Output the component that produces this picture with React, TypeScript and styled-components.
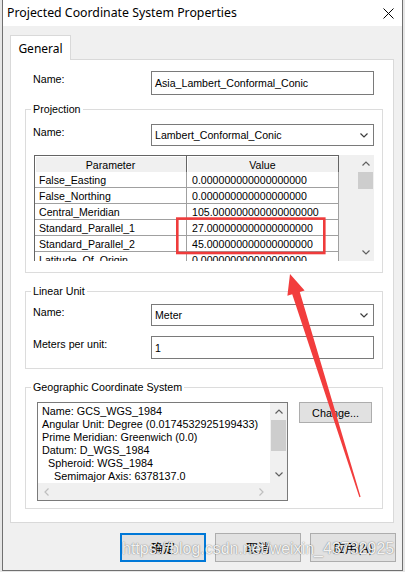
import React from "react";
import styled, { createGlobalStyle } from "styled-components";

const SEGOE = `"Noto Sans", "Noto Sans CJK SC", sans-serif`;
const MSS = `"Liberation Sans", Arial, "Noto Sans CJK SC", sans-serif`;
const CJK = `"Noto Sans CJK SC", "Noto Sans", sans-serif`;

const GlobalStyle = createGlobalStyle`
  html, body { margin: 0; padding: 0; }
  body { background: #e6e6e6; width: 405px; height: 572px; overflow: hidden; }
  * { box-sizing: border-box; }
`;

const Page = styled.div`
  position: relative;
  width: 405px;
  height: 572px;
  padding-left: 2px;
`;

const Window = styled.div`
  width: 401px;
  height: 571px;
  border: 1px solid #707070;
  border-top: none;
  background: #f0f0f0;
  display: flex;
  flex-direction: column;
  color: #000;
`;

const TitleBar = styled.div`
  height: 26px;
  background: #fff;
  display: flex;
  align-items: center;
  justify-content: space-between;
  padding: 0 8px 0 4px;
`;

const Title = styled.div`
  font-family: ${SEGOE};
  font-size: 12.3px;
  line-height: 16px;
`;

const Body = styled.div`
  flex: 1;
  display: flex;
  flex-direction: column;
  padding: 9px 8px 0 7px;
`;

const TabStrip = styled.div`
  display: flex;
  height: 25px;
  margin-bottom: -1px;
  position: relative;
  z-index: 1;
`;

const Tab = styled.div`
  width: 61px;
  height: 25px;
  background: #fff;
  border: 1px solid #d9d9d9;
  border-bottom: none;
  display: flex;
  align-items: center;
  justify-content: center;
  font-family: ${SEGOE};
  font-size: 12px;
  padding-top: 1px;
`;

const Panel = styled.div`
  height: 464px;
  background: #fff;
  border: 1px solid #d9d9d9;
  padding: 11px 10px 0 14px;
  display: flex;
  flex-direction: column;
`;

const FormRow = styled.div<{ $inset?: boolean; $mt?: number }>`
  display: flex;
  align-items: flex-start;
  padding: ${(p) => (p.$inset ? "0 9px 0 8px" : "0")};
  margin-top: ${(p) => p.$mt ?? 0}px;
`;

const Label = styled.div`
  width: 118px;
  flex: none;
  font-family: ${MSS};
  font-size: 10.7px;
  line-height: 16px;
`;

const Field = styled.div<{ $h: number }>`
  flex: 1;
  height: ${(p) => p.$h}px;
  border: 1px solid #7a7a7a;
  background: #fff;
  display: flex;
  align-items: center;
  justify-content: space-between;
  padding: 0 5px 0 3px;
  font-family: ${MSS};
  font-size: 10.6px;
  line-height: 16px;
  white-space: nowrap;
`;

const Group = styled.fieldset<{ $mt: number; $pt: number; $pb: number }>`
  margin: ${(p) => p.$mt}px 0 0 0;
  border: 1px solid #dcdcdc;
  padding: ${(p) => `${p.$pt}px 8px ${p.$pb}px 7px`};
  min-width: 0;
`;

const Legend = styled.legend`
  font-family: ${MSS};
  font-size: 10.7px;
  line-height: 14px;
  padding: 0 2px;
  margin-left: -2px;
`;

const GridBox = styled.div`
  margin: 9px 0 0 1px;
  height: 106px;
  display: flex;
  background: #f0f0f0;
  overflow: hidden;
`;

const Table = styled.div`
  width: 305px;
  flex: none;
  display: grid;
  grid-template-columns: 152px 152px;
  grid-auto-rows: 16px;
  align-content: start;
  border-left: 1px solid #646464;
  border-top: 1px solid #646464;
  font-family: ${MSS};
  font-size: 10.6px;
`;

const HeadCell = styled.div`
  height: 18px;
  background: #f0f0f0;
  border-right: 1px solid #646464;
  border-bottom: 1px solid #505050;
  display: flex;
  align-items: center;
  justify-content: center;
  box-shadow: inset 1px 1px 0 #fff;
`;

const Cell = styled.div<{ $pad: number }>`
  background: #fff;
  border-right: 1px solid #a0a0a0;
  border-bottom: 1px solid #a0a0a0;
  padding-left: ${(p) => p.$pad}px;
  display: flex;
  align-items: center;
  white-space: nowrap;
  overflow: hidden;
`;

const Spacer = styled.div`
  flex: 1;
`;

const VScroll = styled.div`
  width: 17px;
  flex: none;
  display: flex;
  flex-direction: column;
  background: #f0f0f0;
`;

const ScrollArrow = styled.div`
  height: 17px;
  width: 100%;
  flex: none;
  display: flex;
  align-items: center;
  justify-content: center;
`;

const HArrow = styled.div`
  width: 17px;
  height: 100%;
  flex: none;
  display: flex;
  align-items: center;
  justify-content: center;
`;

const Thumb = styled.div<{ $h: number }>`
  height: ${(p) => p.$h}px;
  margin: 0 1px;
  background: #cdcdcd;
  flex: none;
`;

const Track = styled.div`
  flex: 1;
`;

const GeoRow = styled.div`
  display: flex;
  align-items: flex-start;
  gap: 11px;
  padding-left: 4px;
`;

const InfoBox = styled.div`
  width: 251px;
  height: 99px;
  border: 1px solid #7a7a7a;
  background: #fff;
  display: grid;
  grid-template-columns: 1fr 17px;
  grid-template-rows: 1fr 17px;
`;

const InfoText = styled.div`
  padding: 2px 0 0 4px;
  overflow: hidden;
  font-family: ${MSS};
  font-size: 10.8px;
  line-height: 13px;
  white-space: nowrap;
`;

const InfoLine = styled.div<{ $indent: number }>`
  padding-left: ${(p) => p.$indent * 6}px;
`;

const HScroll = styled.div`
  display: flex;
  background: #f0f0f0;
  justify-content: space-between;
`;

const Corner = styled.div`
  background: #f0f0f0;
`;

const SmallButton = styled.div`
  width: 73px;
  height: 21px;
  background: #e1e1e1;
  border: 1px solid #adadad;
  display: flex;
  align-items: center;
  justify-content: center;
  font-family: ${MSS};
  font-size: 10.8px;
`;

const ButtonRow = styled.div`
  display: flex;
  justify-content: flex-end;
  gap: 9px;
  margin: 10px -2px 0 0;
`;

const DlgButton = styled.div<{ $primary?: boolean }>`
  width: 86px;
  height: 29px;
  background: #e1e1e1;
  border: ${(p) => (p.$primary ? "2px solid #0078d7" : "1px solid #adadad")};
  display: flex;
  align-items: center;
  justify-content: center;
  font-family: ${CJK};
  font-size: 12px;
`;

const Overlay = styled.svg`
  position: absolute;
  left: 0;
  top: 0;
  pointer-events: none;
`;

const Watermark = styled.div`
  position: absolute;
  left: 122px;
  top: 540px;
  font-family: ${MSS};
  font-size: 16px;
  line-height: 18px;
  color: rgba(255, 255, 255, 0.92);
  text-shadow: 0 0 1px rgba(0, 0, 0, 0.45), 0 0 2px rgba(0, 0, 0, 0.2);
  white-space: nowrap;
  pointer-events: none;
`;

type Dir = "up" | "down" | "left" | "right";

const Chevron = ({ dir, color = "#606060" }: { dir: Dir; color?: string }) => {
  const pts: Record<Dir, string> = {
    up: "0.5,4.5 4,1 7.5,4.5",
    down: "0.5,0.5 4,4 7.5,0.5",
    left: "4.5,0.5 1,4 4.5,7.5",
    right: "0.5,0.5 4,4 0.5,7.5",
  };
  const vertical = dir === "up" || dir === "down";
  return (
    <svg width={vertical ? 8 : 5} height={vertical ? 5 : 8} viewBox={vertical ? "0 0 8 5" : "0 0 5 8"}>
      <polyline points={pts[dir]} fill="none" stroke={color} strokeWidth="1.2" />
    </svg>
  );
};

const rows: [string, string][] = [
  ["False_Easting", "0.000000000000000000"],
  ["False_Northing", "0.000000000000000000"],
  ["Central_Meridian", "105.000000000000000000"],
  ["Standard_Parallel_1", "27.000000000000000000"],
  ["Standard_Parallel_2", "45.000000000000000000"],
  ["Latitude_Of_Origin", "0.000000000000000000"],
];

const info: [number, string][] = [
  [0, "Name: GCS_WGS_1984"],
  [0, "Angular Unit: Degree (0.0174532925199433)"],
  [0, "Prime Meridian: Greenwich (0.0)"],
  [0, "Datum: D_WGS_1984"],
  [1, "Spheroid: WGS_1984"],
  [2, "Semimajor Axis: 6378137.0"],
];

export default function App() {
  return (
    <>
      <GlobalStyle />
      <Page>
        <Window>
          <TitleBar>
            <Title>Projected Coordinate System Properties</Title>
            <svg width="11" height="11" viewBox="0 0 11 11">
              <path d="M0.5 0.5 L10.5 10.5 M10.5 0.5 L0.5 10.5" stroke="#000" strokeWidth="1" />
            </svg>
          </TitleBar>
          <Body>
            <TabStrip>
              <Tab>General</Tab>
            </TabStrip>
            <Panel>
              <FormRow $inset>
                <Label>Name:</Label>
                <Field $h={24}>Asia_Lambert_Conformal_Conic</Field>
              </FormRow>

              <Group $mt={7} $pt={8} $pb={11}>
                <Legend>Projection</Legend>
                <FormRow>
                  <Label>Name:</Label>
                  <Field $h={22}>
                    <span>Lambert_Conformal_Conic</span>
                    <Chevron dir="down" color="#3c3c3c" />
                  </Field>
                </FormRow>
                <GridBox>
                  <Table>
                    <HeadCell>Parameter</HeadCell>
                    <HeadCell>Value</HeadCell>
                    {rows.map(([k, v]) => (
                      <React.Fragment key={k}>
                        <Cell $pad={4}>{k}</Cell>
                        <Cell $pad={5}>{v}</Cell>
                      </React.Fragment>
                    ))}
                  </Table>
                  <Spacer />
                  <VScroll>
                    <ScrollArrow>
                      <Chevron dir="up" />
                    </ScrollArrow>
                    <Thumb $h={17} />
                    <Track />
                    <ScrollArrow>
                      <Chevron dir="down" />
                    </ScrollArrow>
                  </VScroll>
                </GridBox>
              </Group>

              <Group $mt={11} $pt={6} $pb={9}>
                <Legend>Linear Unit</Legend>
                <FormRow>
                  <Label>Name:</Label>
                  <Field $h={22}>
                    <span>Meter</span>
                    <Chevron dir="down" color="#3c3c3c" />
                  </Field>
                </FormRow>
                <FormRow $mt={10}>
                  <Label>Meters per unit:</Label>
                  <Field $h={23}>1</Field>
                </FormRow>
              </Group>

              <Group $mt={11} $pt={8} $pb={7}>
                <Legend>Geographic Coordinate System</Legend>
                <GeoRow>
                  <InfoBox>
                    <InfoText>
                      {info.map(([ind, t]) => (
                        <InfoLine key={t} $indent={ind}>
                          {t}
                        </InfoLine>
                      ))}
                    </InfoText>
                    <VScroll>
                      <ScrollArrow>
                        <Chevron dir="up" />
                      </ScrollArrow>
                      <Thumb $h={31} />
                      <Track />
                      <ScrollArrow>
                        <Chevron dir="down" />
                      </ScrollArrow>
                    </VScroll>
                    <HScroll>
                      <HArrow>
                        <Chevron dir="left" color="#bfbfbf" />
                      </HArrow>
                      <HArrow>
                        <Chevron dir="right" color="#bfbfbf" />
                      </HArrow>
                    </HScroll>
                    <Corner />
                  </InfoBox>
                  <SmallButton>Change...</SmallButton>
                </GeoRow>
              </Group>
            </Panel>
            <ButtonRow>
              <DlgButton $primary>确定</DlgButton>
              <DlgButton>取消</DlgButton>
              <DlgButton>应用(A)</DlgButton>
            </ButtonRow>
          </Body>
        </Window>

        <Overlay width="405" height="572" viewBox="0 0 405 572">
          <rect x="177.3" y="218.6" width="147" height="34.4" fill="none" stroke="#ef3b3b" strokeWidth="2.6" />
          <polygon
            points="290,274 304.6,290.4 299.8,291.9 360.6,496.8 359.4,497.2 292.2,294.3 287.4,295.8"
            fill="#f23d3d"
          />
        </Overlay>
        <Watermark>https://blog.csdn.net/weixin_43732925</Watermark>
      </Page>
    </>
  );
}
